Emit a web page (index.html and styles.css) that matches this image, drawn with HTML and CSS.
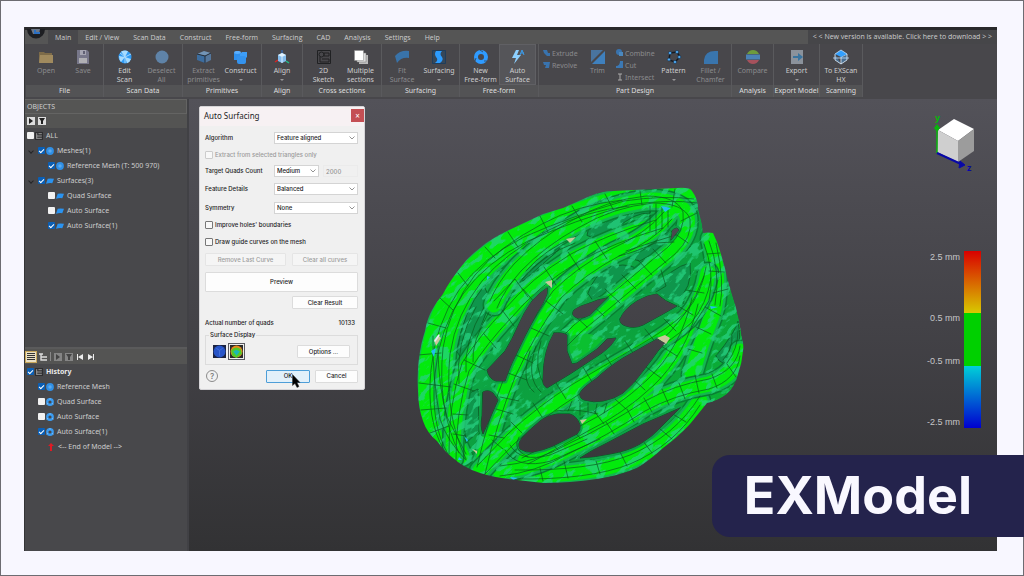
FILE: index.html
```
<!DOCTYPE html>
<html lang="en">
<head>
<meta charset="utf-8">
<title>EXModel</title>
<link rel="stylesheet" href="styles.css">
</head>
<body>
<svg class="sprite" aria-hidden="true">
  <symbol id="gear" viewBox="0 0 14 14"><circle cx="7" cy="7" r="4.800" fill="none" stroke="#3a9cf2" stroke-width="4"/><path d="M7 0v3M1 11l2.500-2M13 11l-2.500-2" stroke="#7cc0ff" stroke-width="1.500"/></symbol>
  <symbol id="mesh" viewBox="0 0 14 14"><circle cx="7" cy="7" r="6.800" fill="#2f8fe6"/><circle cx="7" cy="7" r="3" fill="#5aa9ee"/></symbol>
  <symbol id="patch" viewBox="0 0 14 14"><path d="M3 3q4-1 11 0l-3 8q-5-1-11 1z" fill="#2a93f0"/></symbol>
  <symbol id="tree" viewBox="0 0 14 14"><path d="M0 0h14v14H0z" fill="#2e2e30"/><path d="M3 2v10M6 3h6M3 7h9M3 11h9" stroke="#b6b6b6" stroke-width="1.400" fill="none"/></symbol>
</svg>
<main class="page">
  <div class="app">
    <header class="ribbon">
      <div class="titlebar"></div>
      <nav class="tabs">
        <button class="logo" aria-label="Application menu"><svg viewBox="0 0 20 12"><path d="M1 0a9 9.500 0 0 0 18 0z" fill="#1d1e22"/><path d="M5 0h9l-1 5H7z" fill="#6c7788"/><path d="M8 1h2v2h4v2H8z" fill="#2b6fc2"/></svg></button>
        <button class="tab active">Main</button><button class="tab">Edit / View</button><button class="tab">Scan Data</button><button class="tab">Construct</button><button class="tab">Free-form</button><button class="tab">Surfacing</button><button class="tab">CAD</button><button class="tab">Analysis</button><button class="tab">Settings</button><button class="tab">Help</button>
        <a class="update" href="#">&lt; &lt; New version is available. Click here to download &gt; &gt;</a>
      </nav>
      <div class="groups">
        <section class="group file"><div class="tools">
          <button class="tool" disabled><svg viewBox="0 0 14 14"><path d="M0 2h5l1 1h7v9H0z" fill="#7d6b49"/><path d="M1 5h13v8H0z" fill="#a08a5e"/></svg>Open</button>
          <button class="tool" disabled><svg viewBox="0 0 14 14"><path d="M1 0h10l2 2v12H1z" fill="#77778a"/><path d="M4 0h6v5H4z" fill="#a5a5b2"/><path d="M7 1h2v3H7z" fill="#606074"/><path d="M3 8h8v5H3z" fill="#b0b0b4"/></svg>Save</button>
        </div><h2>File</h2></section>
        <section class="group pair"><div class="tools">
          <button class="tool"><svg viewBox="0 0 14 14"><circle cx="7" cy="7" r="6.500" fill="#2f9bf5"/><path d="M7 7L3 1.500Q7-.5 10 1.200zM7 7l6 2q-1 3-4 4.300zM7 7l-6-1Q1 10 3 12z" fill="#a8dcff"/><path d="M7 7L2 3M7 7l6-3M7 7v6" stroke="#d9f0ff" stroke-width=".7"/></svg>Edit<br>Scan</button>
          <button class="tool" disabled><svg viewBox="0 0 14 14"><circle cx="7" cy="7" r="6.500" fill="#5f83a8"/></svg>Deselect<br>All</button>
        </div><h2>Scan Data</h2></section>
        <section class="group pair"><div class="tools">
          <button class="tool" disabled><svg viewBox="0 0 14 14"><path d="M0 4l7-3 7 2-6 3z" fill="#7294b6"/><path d="M0 4l8 2v7l-8-3z" fill="#3c6d9f"/><path d="M8 6l6-3v7l-6 3z" fill="#55779c"/><path d="M0 4l8 2v7M8 6l6-3" stroke="#252d37" fill="none"/></svg>Extract<br>primitives</button>
          <button class="tool"><svg viewBox="0 0 14 14"><rect y="1" width="7" height="8" rx="2" fill="#5aafff"/><path d="M0 3q3 2 7 0v7H0z" fill="#2f90ee"/><path d="M6 4l2-2h5v5l-2 2H6z" fill="#3d9df7"/><rect x="3" y="6" width="9" height="8" rx="2" fill="#3493ee"/></svg>Construct<i></i></button>
        </div><h2>Primitives</h2></section>
        <section class="group single"><div class="tools">
          <button class="tool"><svg viewBox="0 0 14 14"><path d="M7 0v3" stroke="#2d74d2"/><path d="M0 12l3-2" stroke="#d22" stroke-width="1.500"/><path d="M11 11l3 2" stroke="#2b8" stroke-width="1.500"/><path d="M3 5l4-2 4 2v6l-4 2-4-2z" fill="#83bced"/><path d="M3 5l4-2 4 2-4 2z" fill="#e2f3ff"/><path d="M7 7v6" stroke="#d9edff"/></svg>Align<i></i></button>
        </div><h2>Align</h2></section>
        <section class="group pair"><div class="tools">
          <button class="tool"><svg viewBox="0 0 14 14"><g fill="none" stroke="#202123"><path d="M.5.5h13v13H.5z"/><circle cx="4.500" cy="4.500" r="2.500"/><path d="M7 3h5v3H7zM3 7v5h9V9H5"/></g></svg>2D<br>Sketch</button>
          <button class="tool"><svg viewBox="0 0 14 14"><path d="M5 5h9v9H5z" fill="#bbb"/><path d="M3 3h9v9H3z" fill="#ddd" stroke="#777" stroke-width=".5"/><path d="M.5.5h9v10h-9z" fill="#fff" stroke="#888" stroke-width=".5"/></svg>Multiple<br>sections</button>
        </div><h2>Cross sections</h2></section>
        <section class="group surf"><div class="tools">
          <button class="tool" disabled><svg viewBox="0 0 14 14"><path d="M0 6Q5 0 14 1v7Q6 7 2 13z" fill="#3973a9"/></svg>Fit<br>Surface</button>
          <button class="tool"><svg viewBox="0 0 14 14"><path d="M.5.5h13v13H.5z" fill="#354759" stroke="#203d5a"/><path d="M4 1h6Q7 4 10 7q2 3-2 6H3q4-3 1-6-2-3 0-6z" fill="#2c9cff"/></svg>Surfacing<i></i></button>
        </div><h2>Surfacing</h2></section>
        <section class="group pair"><div class="tools">
          <button class="tool"><svg viewBox="0 0 14 14"><circle cx="7" cy="7" r="5" fill="none" stroke="#2f9bff" stroke-width="4"/><path d="M6 0l3 2M1 11l1-3M13 11l-3 0" stroke="#345" stroke-width=".8"/></svg>New<br>Free-form</button>
          <button class="tool selected"><svg viewBox="0 0 14 14"><path d="M5 0h3L6 5h4L3 14l2-6H1z" fill="#8dd0ff"/><path d="M9 5l2-5 2 5M10 3h3" fill="none" stroke="#3b9cec"/></svg>Auto<br>Surface</button>
        </div><h2>Free-form</h2></section>
        <section class="group design"><div class="tools">
          <div class="stack first">
            <button disabled><svg viewBox="0 0 8 8"><path d="M0 1l4 0 1 3h2v3H4L1 4z" fill="#3973ae"/></svg>Extrude</button>
            <button disabled><svg viewBox="0 0 8 8"><path d="M0 1h7L6 7H2L3 4H1z" fill="#3973ae"/></svg>Revolve</button>
          </div>
          <button class="tool" disabled><svg viewBox="0 0 14 14"><path d="M0 0h12L0 12z" fill="#49749f"/><path d="M14 1v13H1z" fill="#3f80bd"/></svg>Trim</button>
          <div class="stack second">
            <button disabled><svg viewBox="0 0 8 8"><circle cx="3" cy="3" r="3" fill="#3973ae"/><path d="M3 3h4v4H3z" fill="#4b88bf"/></svg>Combine</button>
            <button disabled><svg viewBox="0 0 8 8"><path d="M4 0h3v7H0V5q4 0 4-5z" fill="#3b78b4"/></svg>Cut</button>
            <button disabled><svg viewBox="0 0 8 8"><path d="M2 1h4M4 1v6M2 7h4" stroke="#aaa" fill="none"/></svg>Intersect</button>
          </div>
          <button class="tool"><svg viewBox="0 0 14 14"><path d="M3 3l7-1 3 5-5 5-6-2z" fill="none" stroke="#161a20" stroke-width="1.500"/><g fill="#4da8f2" stroke="#17324d" stroke-width=".6"><circle cx="3" cy="3" r="1.600"/><circle cx="10" cy="2" r="1.600"/><circle cx="12.300" cy="7" r="1.600"/><circle cx="8" cy="12" r="1.600"/><circle cx="2" cy="9.500" r="1.600"/></g></svg>Pattern<i></i></button>
          <button class="tool" disabled><svg viewBox="0 0 14 14"><path d="M0 14V10Q1 1 11 1h3v13z" fill="#3975ad"/></svg>Fillet /<br>Chamfer</button>
        </div><h2>Part Design</h2></section>
        <section class="group analysis"><div class="tools">
          <button class="tool" disabled><svg viewBox="0 0 14 14"><path d="M1 4q2-4 6-4t6 4z" fill="#6e9b3d"/><path d="M0 4.500h14v5H0z" fill="#4b82b5"/><path d="M1 10h12q-2 4-6 4t-6-4z" fill="#a6515c"/></svg>Compare</button>
        </div><h2>Analysis</h2></section>
        <section class="group export"><div class="tools">
          <button class="tool"><svg viewBox="0 0 14 14"><path d="M1 0h12v14H1z" fill="#8b929b"/><path d="M3 6h5V3l5 4-5 4V8H3z" fill="#39749f"/></svg>Export<i></i></button>
        </div><h2>Export Model</h2></section>
        <section class="group scanning"><div class="tools">
          <button class="tool"><svg viewBox="0 0 14 14"><path d="M1 4v6l6 4 6-4V4L7 7v7" fill="#4a6f91" stroke="#e4f3ff" stroke-width=".8"/><path d="M1 4l6-4 6 4-6 3z" fill="#32a0ff"/><path d="M1 4l6-4 6 4M-1 8h16" stroke="#c0e1ff" stroke-width=".8" fill="none"/></svg>To EXScan<br>HX</button>
        </div><h2>Scanning</h2></section>
      </div>
    </header>
    <div class="workspace">
      <aside class="side">
        <section class="objects">
          <h2>OBJECTS</h2>
          <div class="bar">
            <button aria-label="Expand"><svg viewBox="0 0 8 8"><path d="M0 0h8v8H0z" fill="#ddd"/><path d="M2 1l4 3-4 3z" fill="#222"/></svg></button>
            <button aria-label="Filter"><svg viewBox="0 0 8 8"><path d="M0 0h8v8H0z" fill="#ddd"/><path d="M1 1h6L5 4v3H3V4z" fill="#222"/></svg></button>
          </div>
          <ul class="list">
            <li><label><input type="checkbox"><svg><use href="#tree"/></svg>ALL</label></li>
            <li class="branch"><label><input type="checkbox" checked><svg><use href="#mesh"/></svg>Meshes(1)</label></li>
            <li class="leaf"><label><input type="checkbox" checked><svg><use href="#mesh"/></svg>Reference Mesh (T: 500 970)</label></li>
            <li class="branch"><label><input type="checkbox" checked><svg><use href="#patch"/></svg>Surfaces(3)</label></li>
            <li class="leaf"><label><input type="checkbox"><svg><use href="#patch"/></svg>Quad Surface</label></li>
            <li class="leaf"><label><input type="checkbox"><svg><use href="#patch"/></svg>Auto Surface</label></li>
            <li class="leaf"><label><input type="checkbox" checked><svg><use href="#patch"/></svg>Auto Surface(1)</label></li>
          </ul>
        </section>
        <section class="history">
          <div class="bar">
            <button class="on" aria-label="List view"><svg viewBox="0 0 8 8"><path d="M0 .5h8M0 2.500h8M0 4.500h8M0 6.500h8" stroke="#333"/></svg></button>
            <button aria-label="Tree view"><svg viewBox="0 0 8 8"><path d="M0 1h4M2 1v6h6M2 4h6" stroke="#ddd" fill="none" stroke-width="1.400"/></svg></button>
            <span class="rule"></span>
            <button aria-label="Expand" disabled><svg viewBox="0 0 8 8"><path d="M0 0h8v8H0z" fill="#858585"/><path d="M2 1l4 3-4 3z" fill="#444"/></svg></button>
            <button aria-label="Filter" disabled><svg viewBox="0 0 8 8"><path d="M0 0h8v8H0z" fill="#858585"/><path d="M1 1h6L5 4v3H3V4z" fill="#444"/></svg></button>
            <button aria-label="First"><svg viewBox="0 0 8 8"><path d="M1 1h1v6H1zM7 1v6L2 4z" fill="#eee"/></svg></button>
            <button aria-label="Last"><svg viewBox="0 0 8 8"><path d="M6 1h1v6H6zM1 1v6l5-3z" fill="#eee"/></svg></button>
          </div>
          <ul class="list">
            <li><label class="strong"><input type="checkbox" checked><svg><use href="#tree"/></svg>History</label></li>
            <li class="item"><label><input type="checkbox" checked><svg><use href="#mesh"/></svg>Reference Mesh</label></li>
            <li class="item"><label><input type="checkbox"><svg><use href="#gear"/></svg>Quad Surface</label></li>
            <li class="item"><label><input type="checkbox"><svg><use href="#gear"/></svg>Auto Surface</label></li>
            <li class="item"><label><input type="checkbox" checked><svg><use href="#gear"/></svg>Auto Surface(1)</label></li>
            <li class="end"><svg viewBox="0 0 8 8"><path d="M4 0l3 3H5v5H3V3H1z" fill="#e01a24"/></svg>&lt;-- End of Model --&gt;</li>
          </ul>
        </section>
      </aside>
      <section class="viewport">
        <svg class="helmet" viewBox="410 180 340 310" role="img" aria-label="Helmet model with deviation colours">
          <defs>
            <linearGradient id="skin" x1="0" y1="0" x2="1" y2="1"><stop offset="0" stop-color="#14c858"/><stop offset=".5" stop-color="#0ca040"/><stop offset="1" stop-color="#0ab42c"/></linearGradient>
            <filter id="mottle" x="0" y="0" width="100%" height="100%" color-interpolation-filters="sRGB"><feTurbulence type="fractalNoise" baseFrequency=".07 .16" numOctaves="4" seed="11"/><feColorMatrix values="0 0 0 0 .15  0 0 0 0 .82  0 0 0 0 .5  9 0 0 0 -4.7"/></filter>
            <path id="shell" d="M425 330C428 312 436 302 443 293C448 283 454 275 460 267C466 259 472 253 480 247C488 240 497 235 507 230L543 213L563 207L590 195Q602 190 613 190L677 187Q690 186 692 190Q698 198 698 207L702 223L703 232Q708 231 713 232Q717 240 720 250Q725 266 728 280L735 303Q740 320 742 337Q744 344 743 350Q742 362 738 373Q735 386 727 393Q718 400 707 402Q699 412 690 423Q678 436 663 447Q650 459 637 467Q618 475 597 478Q570 482 543 482L517 479Q496 477 480 472Q464 467 453 457Q444 450 437 440Q427 432 423 420Q418 406 418 390Q417 372 419 357Q421 342 425 330z"/>
            <g id="holes">
              <path d="M554 332Q562 331 567 334V350L572 363L577 362L597 348L607 338L616 337Q612 345 602 352L570 373L547 387Q542 384 543 378Q543 350 554 332z"/>
              <path d="M657 338L623 357Q606 368 597 377Q582 387 580 392Q579 397 584 399Q594 402 603 400Q614 398 623 392Q634 383 643 370Q651 360 658 350L665 342z"/>
              <path d="M557 413Q546 415 540 420Q530 428 522 437Q517 443 520 448Q526 452 533 451Q544 449 553 445L577 433Q581 429 580 424Q577 415 570 413z"/>
              <path d="M680 407Q662 415 643 423L607 442Q592 449 580 457Q596 456 610 453Q628 450 640 443Q653 435 660 427Q671 416 680 407z"/>
              <path d="M483 391Q488 388 493 392L498 399L483 433Q480 426 482 415z"/>
              <path d="M547 287Q540 291 532 300Q524 311 518 325Q512 339 505 350L487 369Q489 378 496 380H505Q508 371 512 362L525 335L537 312Q544 302 547 293z"/>
              <path d="M607 297Q598 298 590 302Q579 305 574 309Q570 314 577 317Q584 318 590 314z"/>
              <path d="M620 318Q624 308 637 300Q647 294 657 293Q664 300 677 305L663 313L643 324Q634 328 626 325Q619 323 620 318z"/>
              <path d="M672 232Q671 228 677 227L679 229L671 239z"/>
            </g>
            <mask id="cut" maskUnits="userSpaceOnUse" x="410" y="180" width="340" height="310"><use href="#shell" fill="#fff"/><use href="#holes" fill="#000"/></mask>
            <path id="b1" d="M440 445Q422 415 427 365Q431 320 455 285Q478 253 520 232Q565 212 620 196Q660 190 690 194"/>
            <path id="b2" d="M462 455Q440 410 446 350Q452 310 478 277Q500 250 545 226Q580 207 625 202"/>
            <path id="b3" d="M494 304Q501 286 518 267Q542 242 575 224Q610 203 650 199Q681 199 687 215Q690 233 672 250Q650 268 625 289Q600 310 578 328L556 350"/>
            <path id="b4" d="M453 457Q452 410 466 366Q485 337 508 313Q535 281 575 257Q612 237 660 223"/>
            <path id="b5" d="M481 469Q492 420 511 372Q530 330 557 293Q580 270 615 251Q650 236 668 214"/>
            <path id="b6" d="M708 272Q704 298 688 317Q670 334 640 351L575 389Q540 411 511 438L480 470"/>
            <path id="b7" d="M695 300Q684 350 650 382Q620 410 585 427Q550 447 525 460"/>
            <path id="b8" d="M740 350Q737 374 709 383Q674 389 645 405Q605 431 570 447Q535 467 500 470"/>
            <path id="b9" d="M700 400Q675 440 630 459Q590 475 515 474"/>
            <path id="b10" d="M711 238Q722 285 712 315Q700 345 692 374"/>
            <g id="beams"><use href="#b9"/><use href="#b1"/><use href="#b2"/><use href="#b10"/></g>
            <g id="beams2"><use href="#b4"/><use href="#b7"/><use href="#b8"/></g>
            <g id="beams3"><use href="#b3"/><use href="#b5"/></g>
          </defs>
          <g mask="url(#cut)">
            <use href="#shell" fill="url(#skin)"/>
            <g class="beam"><use href="#beams" class="edge"/><use href="#beams" class="teal"/><use href="#beams" class="lime"/></g>
            <g class="hollow">
              <path d="M518 266Q530 246 557 230L571 228Q570 241 545 261L523 280z"/>
              <path d="M587 234Q588 218 613 204Q636 198 653 199L650 212Q635 211 616 228L597 238z"/>
              <path d="M621 254Q637 244 677 226L682 231Q668 245 640 260z"/>
              <path d="M588 292Q594 275 607 267Q624 261 636 267L620 285L593 299z"/>
              <path d="M457 350Q463 310 484 285L491 300Q480 326 466 365z"/>
              <path d="M650 292Q671 266 690 262Q694 286 674 304z"/>
              <path d="M463 395L478 388L479 430L466 442z"/>
              <path d="M716 355Q735 332 738 320Q743 344 733 360Q722 367 716 355z"/>
            </g>
            <g class="beam"><use href="#beams2" class="edge"/><use href="#beams2" class="teal"/><use href="#beams2" class="lime"/></g>
            <g class="beam"><use href="#beams3" class="edge"/><use href="#beams3" class="teal"/><use href="#beams3" class="lime"/></g>
            <g class="beam"><use href="#b6" class="edge"/><use href="#b6" class="teal"/><use href="#b6" class="lime"/></g>
            <path d="M568 336Q583 330 597 335L608 339L596 349L574 363Q566 352 568 336z" fill="#0bc030"/>
            <rect x="330" y="90" width="500" height="500" transform="rotate(-40 580 335)" filter="url(#mottle)" opacity=".75"/>
            <use href="#holes" class="rim"/><use href="#holes" class="rim-line"/>
            <g class="mesh-lines">
              <path d="M428 322l18 5M440 297l13 12M458 272l10 13M485 246l10 11M508 231l10 15M540 215l8 16M572 205l10 16M605 193l8 15M640 190l2 14M675 188l-3 18M697 212l-16 8M688 242l-17-12M666 262l-13-14M652 274l-14-15M636 288l-14-14M620 302l-15-14M604 315l-14-13M587 326l-13-12M595 240l12 18M568 251l12 18M544 266l12 18M523 288l13 15M502 309l12 16M484 333l12 14M464 359l21 10M454 383l20 7M453 413l15 1M453 433l13 2M546 300l17 13M531 327l18 8M516 354l17 8M508 372l19 7M500 396l19 4M496 408l17 5M489 434l15 3M704 292l-18-3M693 314l-15-9M676 330l-12-12M656 342l-11-14M635 355l-10-15M614 368l-9-14M592 381l-9-15M566 398l-10-16M542 416l-9-14M522 432l-11-11M503 448l-11-9M677 355l-16-10M661 377l-15-11M645 389l-12-11M626 408l-11-10M604 423l-10-13M580 437l-9-10M558 449l-8-9M736 376l-9-13M717 387l-5-14M699 392l-4-18M685 398l-6-16M669 404l-7-16M652 411l-8-14M634 421l-7-13M614 433l-8-12M686 421l-15-9M672 438l-12-10M652 452l-9-12M627 465l-7-14M600 473l-4-13M568 477l-4-17M543 480l-3-13M418 354l23-2M419 382l32 4M421 409l25-2M430 432l19-7M720 252l-13 1M724 271l-15-1M728 288l-15 4M721 315l-16-9M711 333l-15-7M702 352l-14-4"/>
              <path d="M433 335Q432 374 440 418Q447 440 466 459M438 345Q438 384 447 416L466 453M476 306Q455 342 459 383M484 306Q463 343 466 371M489 311Q471 342 473 361M530 350Q520 380 534 391M536 345Q525 377 541 391M541 340Q532 368 546 386M522 278Q542 254 575 242M526 270Q545 248 575 236M619 255Q639 250 655 242L674 241M626 250Q649 242 676 234M704 243Q715 270 709 300L689 331M709 240Q721 270 715 304M716 242Q725 281 720 305M704 275Q690 316 655 345M732 334Q733 348 723 359M738 330Q738 348 727 362M494 300L515 278L528 296M661 269L666 285L656 291M650 205V230M656 203V233M662 206V228M668 207V226M510 444Q520 462 550 454L587 438M505 449Q517 469 551 460L600 438M519 436Q511 448 528 456M572 400l-4 10M580 401v13M588 402v11M597 403l-2 10M607 402l-3 10M555 410Q575 407 598 413"/>
              <g class="seams">
                <use href="#b1" x="4" y="4"/><use href="#b1" x="8" y="8"/><use href="#b2" x="4" y="3"/><use href="#b2" x="-3" y="-3"/>
                <use href="#b3" x="-4" y="-4"/><use href="#b3" x="3" y="3"/><use href="#b4" x="-4" y="-4"/><use href="#b4" x="3" y="4"/>
                <use href="#b5" x="-4" y="-3"/><use href="#b5" x="4" y="4"/><use href="#b6" x="-2" y="-6"/><use href="#b6" x="3" y="5"/>
                <use href="#b7" x="-3" y="-3"/><use href="#b7" x="3" y="3"/><use href="#b8" y="-5"/><use href="#b8" y="5"/><use href="#b9" y="-5"/><use href="#b9" y="4"/>
              </g>
            </g>
            <g class="sparks"><path d="M434 339l4-5 3 3-5 8zM545 281l7-2v8zM566 238l10-2-6 6zM657 337l8-3 5 3-4 6zM580 419l7-1-5 5zM472 448l5 2v3z" fill="#c8c79a"/><path d="M431 350l5-3-2 9zM661 205l10 2-6 4zM710 305l8 1-7 2zM487 275l3 1-3 3zM464 435l4 4-1 2zM459 456l3 3h-4zM510 476l8 1-5 2z" fill="#20bdf0"/><path d="M435 340l4-6M657 341l7 2" stroke="#e6eeff" stroke-width="1.500"/></g>
          </g>
        </svg>
        <svg class="cube" viewBox="0 0 44 60" role="img" aria-label="View orientation">
          <path d="M23 5l20 10-16 12L7 16z" fill="#fff"/><path d="M7 16l20 11v21L6 38z" fill="#cfcfcf"/><path d="M27 27l16-12v22L27 48z" fill="#9c9c9c"/>
          <path d="M6 39V14" stroke="#08b40c" stroke-width="1.500"/><path d="M6 10l3 4-3 4-3-4z" fill="#08b40c"/><path d="M6 39l24 11" stroke="#0808a8" stroke-width="2"/><path d="M29 47l5 4-6 3z" fill="#0808a8" stroke="#0808a8"/>
          <text x="4" y="7" fill="#08b40c">y</text><text x="36" y="57" fill="#0808a8">z</text>
        </svg>
        <div class="legend">
          <div class="legend-text"><span>2.5 mm</span><span>0.5 mm</span><span>-0.5 mm</span><span>-2.5 mm</span></div>
          <div class="legend-bar"></div>
        </div>
      </section>
    </div>
    <form class="dialog" aria-label="Auto Surfacing">
      <header><h1>Auto Surfacing</h1><button type="button" class="close" aria-label="Close">×</button></header>
      <div class="fields">
        <div class="row algorithm"><label for="alg">Algorithm</label><select id="alg"><option>Feature aligned</option></select></div>
        <div class="row check muted"><input id="ext" type="checkbox" disabled><label for="ext">Extract from selected triangles only</label></div>
        <div class="row target"><label for="quads">Target Quads Count</label><select id="quads"><option>Medium</option></select><input aria-label="Quad count" type="text" value="2000" disabled></div>
        <div class="row feature"><label for="feat">Feature Details</label><select id="feat"><option>Balanced</option></select></div>
        <div class="row symmetry"><label for="sym">Symmetry</label><select id="sym"><option>None</option></select></div>
        <div class="row check"><input id="imp" type="checkbox"><label for="imp">Improve holes' boundaries</label></div>
        <div class="row check"><input id="draw" type="checkbox"><label for="draw">Draw guide curves on the mesh</label></div>
        <div class="row curves"><button type="button" disabled>Remove Last Curve</button><button type="button" disabled>Clear all curves</button></div>
        <button type="button" class="preview">Preview</button>
        <button type="button" class="clear">Clear Result</button>
        <div class="row count"><span>Actual number of quads</span><output>10133</output></div>
        <fieldset><legend>Surface Display</legend>
          <button type="button" class="swatch" aria-label="Plain surface"><svg viewBox="0 0 12 12"><path d="M0 0h12v12H0z" fill="#1b2340"/><circle cx="6" cy="6" r="5.500" fill="#2855c8"/><path d="M3 3l3 2 3-2M6 5v5" stroke="#4b78e0" stroke-width=".7" fill="none"/></svg></button>
          <button type="button" class="swatch picked" aria-label="Deviation colours"><svg viewBox="0 0 12 12"><path d="M0 0h12v12H0z" fill="#2a2a2a"/><circle cx="6" cy="6" r="5.500" fill="#e68a1c"/><path d="M1 5q4-5 9-1l1 4-5 4-4-2z" fill="#51c92c"/><path d="M3 6q3-3 6 0l-3 4z" fill="#1cb8b4"/></svg></button>
          <button type="button" class="options">Options ...</button>
        </fieldset>
        <div class="row actions"><button type="button" class="help" aria-label="Help">?</button><button type="submit" class="ok">OK</button><button type="button" class="cancel">Cancel</button></div>
      </div>
      <svg class="cursor" viewBox="0 0 9 14" aria-hidden="true"><path d="M.5.5v11l2.500-2 2 4 2-1-2-4h3z" fill="#000" stroke="#333" stroke-width=".5"/></svg>
    </form>
  </div>
  <div class="badge">EXModel</div>
</main>
</body>
</html>
```
FILE: styles.css
```
* { box-sizing: border-box; }
body { margin: 0; font: 7px/9px "Noto Sans", "Open Sans", sans-serif; color: #cdcdce; }
button, input, select { font: inherit; color: inherit; margin: 0; padding: 0; border: 0; background: none; }
h1, h2, ul { margin: 0; padding: 0; font-size: inherit; font-weight: 400; list-style: none; }
svg { display: block; }
.sprite { position: absolute; width: 0; height: 0; }
.page { position: relative; display: flex; min-height: 100vh; padding: 26px 26px 24px 23px; background: #f8f7ff; border: 1px solid #6d6c72; }
.app { position: relative; flex: 1; display: flex; flex-direction: column; background: #48484b; border-left: 1px solid #343436; }

.titlebar { height: 3px; background: #29292b; }
.ribbon { background: #48474b; padding-bottom: 2px; }
.tabs { display: flex; height: 14px; background: #555555; font-family: "Open Sans", sans-serif; }
.logo { width: 23px; }
.logo svg { width: 20px; height: 12px; margin: -5px 0 0 1px; }
.tab { padding: 0 7px; white-space: nowrap; }
.tab.active { background: #48484b; }
.update { margin-left: auto; padding: 0 5px; line-height: 13px; background: #464649; color: #cdcdce; text-decoration: none; white-space: nowrap; }
.groups { display: flex; padding-left: 1px; }
.group { display: flex; flex-direction: column; border-right: 1px solid #5a5a5d; flex: none; }
.group h2 { height: 12px; line-height: 12px; background: #535355; text-align: center; color: #dededf; white-space: nowrap; }
.tools { display: flex; justify-content: center; height: 41px; }
.file, .surf { width: 78px; }
.pair { width: 79px; }
.single { width: 41px; }
.design { width: 193px; }
.analysis { width: 42px; }
.export { width: 46px; }
.scanning { width: 43px; }
.tool { display: flex; flex-direction: column; align-items: center; width: 37px; padding-top: 6px; white-space: nowrap; text-align: center; }
.tool svg { width: 14px; height: 14px; flex: none; margin-bottom: 2px; overflow: visible; }
.tool i { border: 2px solid transparent; border-top-color: #98989a; margin-top: 4px; }
.tool:disabled, .stack button { color: #8b8b8d; }
.selected { background: #555559; outline: 1px solid #606064; outline-offset: -1px; }
.design .tools { justify-content: flex-start; padding-left: 4px; }
.stack { display: flex; flex-direction: column; padding-top: 3px; flex: none; }
.stack button { display: flex; align-items: center; gap: 1px; height: 12px; white-space: nowrap; }
.stack svg { width: 8px; height: 8px; }
.first { width: 36px; }
.second { width: 39px; }

.workspace { flex: 1; display: grid; grid-template-columns: 164px 1fr; }
.side { display: grid; grid-template-rows: 248px 1fr; border-right: 2px solid #414145; background: #48484b; }
.objects h2 { height: 15px; line-height: 13px; padding-left: 2px; background: #555554; border: 1px solid #646463; border-left: 0; }
.bar { display: flex; align-items: center; gap: 3px; height: 14px; padding-left: 2px; background: #545453; }
.bar svg { width: 8px; height: 8px; }
.list li { display: flex; align-items: center; height: 15px; padding-left: 2px; white-space: nowrap; }
.list label { display: flex; align-items: center; }
.list svg { width: 8px; height: 8px; margin: 0 3px 0 1px; }
.list input { appearance: none; width: 7px; height: 7px; background: #f2f2f2; border-radius: 1px; }
.list input:checked { background: #0b5fb5; display: grid; place-items: center; }
.list input:checked::after { content: ""; width: 4px; height: 2px; border: solid #fff; border-width: 0 0 1px 1px; transform: rotate(-45deg); }
.list .branch { padding-left: 4px; }
.branch::before { content: ""; width: 3px; height: 3px; border: solid #252527; border-width: 0 1px 1px 0; transform: rotate(45deg); margin-right: 5px; }
.list .leaf { padding-left: 23px; }
.list .item { padding-left: 13px; }
.list .end { padding-left: 21px; }
.list .strong { font-weight: 700; color: #ececec; }
.history { border-top: 2px solid #5a5a5b; }
.history .bar { gap: 3px; padding-left: 1px; height: 15px; }
.history .on { background: #e9dfc5; outline: 1px solid #c7a65a; padding: 1px; }
.rule { width: 1px; height: 9px; background: #888; }

.viewport { position: relative; background: linear-gradient(#535259, #434247 50%, #323234); overflow: hidden; }
.helmet { position: absolute; left: 221px; top: 82px; width: 340px; height: 310px; }
.helmet use, .helmet path { stroke-linecap: round; stroke-linejoin: round; }
.beam { fill: none; }
.edge { stroke: #087f32; stroke-width: 23px; }
.teal { stroke: #14b650; stroke-width: 20px; }
.lime { stroke: #03ea0c; stroke-width: 15px; }
.hollow { fill: #0f964c; stroke: #0a6a2c; stroke-width: 1px; }
.rim { fill: none; stroke: #0ea046; stroke-width: 5px; }
.rim-line { fill: none; stroke: #075a20; stroke-width: 1px; }
.mesh-lines { fill: none; stroke: #0a5a1c; stroke-width: 0.7px; }
.seams { stroke: #0a5c1e; stroke-width: 0.7px; }
.cube { position: absolute; right: 22px; top: 15px; width: 44px; height: 60px; overflow: visible; }
.cube text { font: 700 9px "Open Sans", sans-serif; }
.legend { position: absolute; right: 16px; top: 152px; display: flex; gap: 4px; height: 177px; }
.legend-bar { width: 17px; background: linear-gradient(#d90000, #d8c900 35%, #00d000 35%, #00d000 65%, #00d0d8 65%, #0000d0); }
.legend-text { display: flex; flex-direction: column; text-align: right; font: 9px/12px "Liberation Sans", sans-serif; color: #c6c6c8; }
.legend-text span:nth-child(2) { margin-top: 49px; }
.legend-text span:nth-child(3) { margin-top: 31px; }
.legend-text span:nth-child(4) { margin-top: 49px; }

.dialog { position: absolute; left: 174px; top: 79px; width: 166px; background: #f0f0f0; color: #1c1c1e; border: 1px solid #d5d4d7; border-radius: 2px; font: 500 6px/8px Inter, "Noto Sans", sans-serif; }
.dialog header { display: flex; justify-content: space-between; height: 19px; background: #f7f1f3; font: 8px/17px "Noto Sans", sans-serif; padding-left: 4px; }
.close { width: 13px; height: 13px; margin-top: 2px; background: #c44f54; color: #fff; line-height: 12px; }
.fields { display: flex; flex-direction: column; padding: 4px 6px 6px 5px; }
.row { display: flex; align-items: center; justify-content: space-between; height: 17px; white-space: nowrap; }
.algorithm, .target { height: 16px; }
.feature { height: 20px; }
.dialog select { width: 84px; height: 12px; padding: 0 2px; border: 1px solid #d4d4d4; background: #fff url("data:image/svg+xml,%3Csvg xmlns='http://www.w3.org/2000/svg' viewBox='0 0 6 4'%3E%3Cpath d='M.5.5L3 3 5.500.5' fill='none' stroke='%23777' stroke-width='.8'/%3E%3C/svg%3E") no-repeat right 2px center / 6px 4px; appearance: none; }
.dialog .target select { width: 45px; margin-left: auto; }
.dialog .target input { width: 35px; height: 12px; margin-left: 4px; padding-left: 2px; color: #929292; border: 1px solid #ebebeb; }
.row.check { justify-content: flex-start; gap: 2px; }
.check input { appearance: none; width: 8px; height: 8px; border: 1px solid #777; border-radius: 1px; background: #f8f8f8; }
.muted { color: #9a9a9a; }
.muted input { border-color: #ccc; }
.curves { height: 19px; gap: 5px; }
.curves button, .preview, .clear, .options, .ok, .cancel { height: 13px; background: #fdfdfd; border: 1px solid #dcdcdc; border-radius: 1px; }
.curves button { color: #9c9c9c; background: #f5f5f5; border-color: #e5e5e5; width: 81px; }
.curves button + button { width: 66px; }
.fields .preview { height: 20px; margin-top: 3px; }
.clear { width: 66px; margin-top: 4px; align-self: flex-end; }
.count { height: 13px; margin-top: 7px; padding-right: 3px; }
fieldset { display: flex; align-items: center; margin: 2px 0 0; padding: 4px 7px 1px 5px; border: 1px solid #dcdcdc; min-width: 0; height: 34px; }
legend { padding: 0 1px; margin-left: -2px; }
.swatch { width: 17px; height: 17px; padding: 1px; border: 1px solid transparent; }
.swatch svg { width: 100%; height: 100%; }
.picked { border-color: #5b5b60; }
.options { width: 53px; margin-left: auto; }
.actions { height: 14px; margin-top: 4px; gap: 5px; }
.help { width: 12px; height: 12px; border: 1px solid #8b8b8b; border-radius: 50%; color: #777; font-size: 8px; line-height: 9px; margin: 0 auto 0 1px; }
.ok { width: 44px; background: #e2f0fa; border: 1px solid #4d9ed8; }
.cancel { width: 43px; }
.cursor { position: absolute; left: 92px; top: 267px; width: 9px; height: 14px; }
.badge { position: absolute; right: -1px; bottom: 38px; padding: 0 52px 0 32px; border-radius: 18px 0 0 18px; background: #24234c; color: #f9f8ff; font: 700 52px/82px Inter, "Open Sans", sans-serif; }
```
